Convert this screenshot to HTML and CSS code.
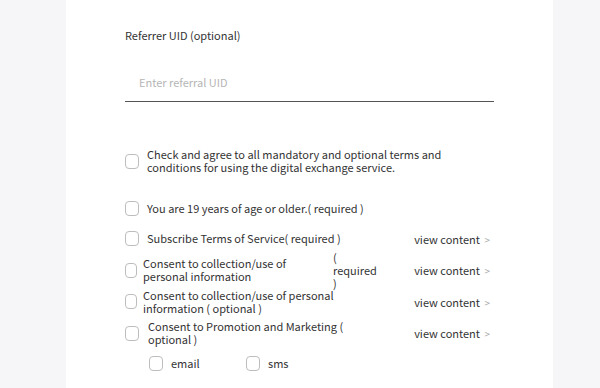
FILE: index.html
```html
<!DOCTYPE html>
<html lang="en">
<head>
    <meta charset="UTF-8">
    <meta name="viewport" content="width=device-width, initial-scale=1.0">
    <title>Sign up - Terms</title>
    <link rel="stylesheet" href="styles.css">
</head>
<body>
    <div class="signup-card">
        <div class="referrer-field">
            <label class="field-label" for="referrer">Referrer UID (optional)</label>
            <input class="field-input" id="referrer" type="text" placeholder="Enter referral UID">
        </div>

        <div class="terms">
            <div class="check-row agree-all">
                <span class="checkbox"></span>
                <p class="check-text">Check and agree to all mandatory and optional terms and conditions for using the digital exchange service.</p>
            </div>

            <div class="check-row age-row">
                <span class="checkbox"></span>
                <p class="check-text">You are 19 years of age or older.( required )</p>
            </div>

            <div class="term-row">
                <span class="checkbox"></span>
                <p class="term-name single">Subscribe Terms of Service( required )</p>
                <a class="view-link" href="#">view content <span class="chevron">&gt;</span></a>
            </div>

            <div class="term-row">
                <span class="checkbox small"></span>
                <p class="term-name narrow">Consent to collection/use of personal information</p>
                <span class="term-tag">( required )</span>
                <a class="view-link" href="#">view content <span class="chevron">&gt;</span></a>
            </div>

            <div class="term-row">
                <span class="checkbox small"></span>
                <p class="term-name tight">Consent to collection/use of personal information ( optional )</p>
                <a class="view-link" href="#">view content <span class="chevron">&gt;</span></a>
            </div>

            <div class="term-row">
                <span class="checkbox"></span>
                <p class="term-name">Consent to Promotion and Marketing ( optional )</p>
                <a class="view-link" href="#">view content <span class="chevron">&gt;</span></a>
            </div>

            <div class="channel-row">
                <div class="channel">
                    <span class="checkbox"></span>
                    <span>email</span>
                </div>
                <div class="channel">
                    <span class="checkbox"></span>
                    <span>sms</span>
                </div>
            </div>
        </div>
    </div>
</body>
</html>
```

FILE: styles.css
```css
* {
    margin: 0;
    padding: 0;
    box-sizing: border-box;
}

body {
    font-family: 'Noto Sans CJK KR', 'Noto Sans', sans-serif;
    background: #f6f6f8;
    color: #333333;
    font-size: 11px;
}

.signup-card {
    width: 487px;
    margin-left: 66px;
    min-height: 388px;
    background: #ffffff;
    padding: 26px 59px 0;
}

.field-label {
    display: block;
    line-height: 18px;
    color: #333333;
}

.field-input {
    display: block;
    width: 100%;
    margin-top: 19px;
    height: 39px;
    border: none;
    border-bottom: 1px solid #555555;
    padding: 0 14px;
    font-family: inherit;
    font-size: 11px;
    color: #333333;
    outline: none;
}

.field-input::placeholder {
    color: #b5b5b5;
}

.terms {
    margin-top: 46px;
}

.checkbox {
    flex: 0 0 auto;
    width: 14px;
    height: 15px;
    border: 1px solid #bdbdbd;
    border-radius: 4px;
    background: #ffffff;
}

.checkbox.small {
    width: 12px;
}

.check-row {
    display: flex;
    align-items: center;
    gap: 8px;
}

.check-text {
    line-height: 13px;
    max-width: 300px;
}

.age-row {
    margin-top: 27px;
}

.term-row {
    display: flex;
    align-items: center;
    height: 31.5px;
    margin-top: 7px;
}

.term-row + .term-row {
    margin-top: 0;
}

.term-name {
    width: 200px;
    margin-left: 9px;
    line-height: 13px;
}

.term-name.single {
    margin-left: 8px;
}

.term-name.tight {
    margin-left: 6px;
}

.term-name.narrow {
    width: 184px;
    margin-left: 6px;
}

.term-tag {
    width: 44px;
    margin-left: 6px;
    line-height: 13px;
}

.view-link {
    margin-left: auto;
    margin-right: 4px;
    color: #333333;
    text-decoration: none;
    white-space: nowrap;
}

.chevron {
    color: #aaaaaa;
    font-size: 10px;
    margin-left: 2px;
}

.channel-row {
    display: flex;
    gap: 44px;
    padding-left: 24px;
    margin-top: 6px;
}

.channel {
    display: flex;
    align-items: center;
    gap: 8px;
    width: 53px;
}
```
